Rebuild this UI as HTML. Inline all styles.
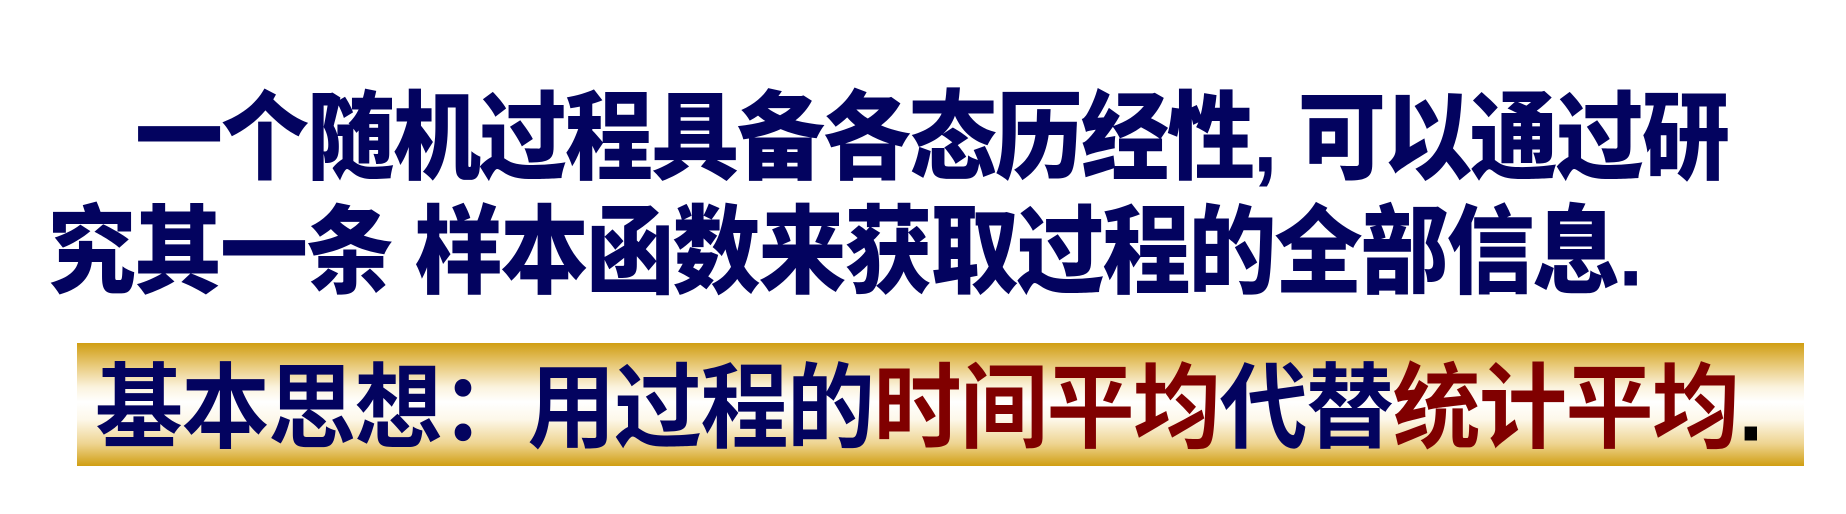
<!DOCTYPE html>
<html><head><meta charset="utf-8"><style>
html,body{margin:0;padding:0;background:#fff;width:1846px;height:514px;overflow:hidden;position:relative}
.l{position:absolute;white-space:nowrap;font-family:"Liberation Sans","Noto Sans CJK SC",sans-serif;font-size:88px;line-height:88px;color:#03035f;font-weight:900;letter-spacing:-2px;transform:scaleY(1.1);transform-origin:0 0}
.box{position:absolute;left:77px;top:343px;width:1727px;height:123px;background:linear-gradient(#d09e12 0%,#e8c978 18%,#fbf3de 36%,#fff 48%,#fdf8ea 62%,#eed490 82%,#d09e12 100%)}
.b{position:absolute;left:95px;top:362px;white-space:nowrap;font-family:"Liberation Sans","Noto Sans CJK SC",sans-serif;font-size:88px;line-height:88px;color:#03035f;font-weight:700;letter-spacing:-1.5px;transform:scaleY(1.06);transform-origin:0 0}
.r{color:#800000}
.k{color:#000}
</style></head><body>
<div class="l" style="left:135px;top:90px">一个随机过程具备各态历经性, 可以通过研</div>
<div class="l" style="left:48px;top:204px">究其一条 样本函数来获取过程的全部信息.</div>
<div class="box"></div>
<div class="b">基本思想：用过程的<span class="r">时间平均</span>代替<span class="r">统计平均</span><span class="k">.</span></div>
</body></html>
